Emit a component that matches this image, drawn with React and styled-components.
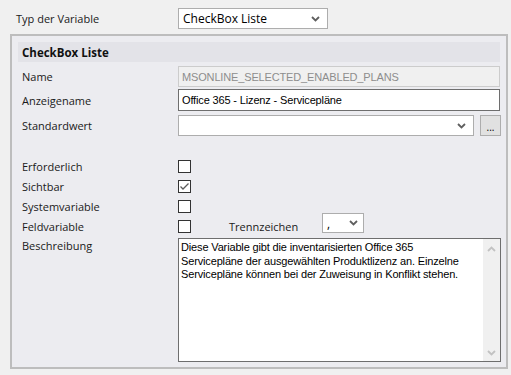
import styled, { createGlobalStyle } from "styled-components";

const Global = createGlobalStyle`
  html, body {
    margin: 0;
    padding: 0;
    background: #f0f0f0;
  }
  #root {
    width: 511px;
    height: 375px;
    overflow: hidden;
  }
`;

const Chevron = ({ color = "#5f5f5f", up }) => (
  <svg width="9" height="6" viewBox="0 0 9 6">
    <path
      d={up ? "M1 5 L4.5 1.5 L8 5" : "M1 1 L4.5 4.5 L8 1"}
      fill="none"
      stroke={color}
      strokeWidth="1.8"
    />
  </svg>
);

const Tick = () => (
  <svg width="11" height="11" viewBox="0 0 11 11">
    <path d="M1.5 5.5 L4 8 L9.5 2.5" fill="none" stroke="#5a5a5a" strokeWidth="1.3" />
  </svg>
);

const App = () => {
  return (
    <Page>
      <Global />
      <TopRow>
        <TopLabel>Typ der Variable</TopLabel>
        <Combo width={150}>
          <ComboText>CheckBox Liste</ComboText>
          <Chevron />
        </Combo>
      </TopRow>

      <Panel>
        <Header>CheckBox Liste</Header>

        <Row top={4} height={21}>
          <Label>Name</Label>
          <Input disabled>MSONLINE_SELECTED_ENABLED_PLANS</Input>
        </Row>
        <Row top={2} height={22}>
          <Label>Anzeigename</Label>
          <Input>Office 365 - Lizenz - Servicepläne</Input>
        </Row>
        <Row top={4} height={21}>
          <Label>Standardwert</Label>
          <Combo width={297}>
            <ComboText />
            <Chevron />
          </Combo>
          <DotsButton>...</DotsButton>
        </Row>

        <CheckRow top={20}>
          <Label>Erforderlich</Label>
          <Box />
        </CheckRow>
        <CheckRow>
          <Label>Sichtbar</Label>
          <Box>
            <Tick />
          </Box>
        </CheckRow>
        <CheckRow>
          <Label>Systemvariable</Label>
          <Box />
        </CheckRow>
        <CheckRow>
          <Label>Feldvariable</Label>
          <Box />
          <SubLabel>Trennzeichen</SubLabel>
          <SmallCombo>
            <ComboText>,</ComboText>
            <Chevron />
          </SmallCombo>
        </CheckRow>

        <MemoRow>
          <Label>Beschreibung</Label>
          <Memo>
            <MemoText>
              Diese Variable gibt die inventarisierten Office 365
              <br />
              Servicepläne der ausgewählten Produktlizenz an. Einzelne
              <br />
              Servicepläne können bei der Zuweisung in Konflikt stehen.
            </MemoText>
            <ScrollTrack>
              <Chevron color="#c2c2c2" up />
              <Chevron color="#c2c2c2" />
            </ScrollTrack>
          </Memo>
        </MemoRow>
      </Panel>
    </Page>
  );
};

const Page = styled.div`
  width: 511px;
  height: 375px;
  background: #f0f0f0;
  font-family: "Open Sans", "Noto Sans", sans-serif;
  font-size: 11px;
  color: #1a1a1a;
  padding-top: 8px;
  box-sizing: border-box;
`;

const TopRow = styled.div`
  display: flex;
  align-items: center;
  height: 21px;
  padding-left: 16px;
`;

const TopLabel = styled.div`
  width: 162px;
`;

const Combo = styled.div`
  width: ${(p) => p.width}px;
  height: 100%;
  box-sizing: border-box;
  display: flex;
  align-items: center;
  background: #fff;
  border: 1px solid #adadad;
  padding: 0 7px 0 4px;
`;

const ComboText = styled.span`
  flex: 1;
  font-size: 12px;
  color: #000;
`;

const Panel = styled.div`
  margin: 5px 0 0 10px;
  width: 498px;
  height: 335px;
  box-sizing: border-box;
  border: 2px solid #bdbdbd;
  background: #ececf0;
  padding: 6px 5px 0 6px;
`;

const Header = styled.div`
  width: 482px;
  height: 20px;
  box-sizing: border-box;
  background: #e3e3e8;
  padding-left: 4px;
  display: flex;
  align-items: center;
  font-weight: 700;
  font-size: 11.5px;
  color: #111;
`;

const Row = styled.div`
  display: flex;
  align-items: center;
  margin-top: ${(p) => p.top}px;
  height: ${(p) => p.height}px;
`;

const Label = styled.div`
  width: 156px;
  flex: none;
  padding-left: 4px;
  color: #1a1a1a;
`;

const Input = styled.div`
  width: 322px;
  height: 100%;
  box-sizing: border-box;
  display: flex;
  align-items: center;
  padding-left: 3px;
  font-family: "Liberation Sans", Arial, sans-serif;
  font-size: 11px;
  letter-spacing: -0.15px;
  background: ${(p) => (p.disabled ? "#f0f0f0" : "#fff")};
  color: ${(p) => (p.disabled ? "#8d8d8d" : "#000")};
  border: 1px solid ${(p) => (p.disabled ? "#cccccc" : "#6e6e6e")};
`;

const DotsButton = styled.div`
  width: 21px;
  height: 100%;
  box-sizing: border-box;
  margin-left: 6px;
  background: #e1e1e1;
  border: 1px solid #adadad;
  display: flex;
  align-items: flex-end;
  justify-content: center;
  padding-bottom: 5px;
  font-size: 10px;
  line-height: 6px;
  color: #000;
`;

const CheckRow = styled.div`
  display: flex;
  align-items: center;
  height: 20px;
  margin-top: ${(p) => p.top || 0}px;
`;

const Box = styled.div`
  width: 13px;
  height: 13px;
  box-sizing: border-box;
  border: 1px solid #333;
  background: #fff;
  display: flex;
  align-items: center;
  justify-content: center;
`;

const SubLabel = styled.div`
  margin-left: 38px;
  width: 93px;
`;

const SmallCombo = styled(Combo)`
  width: 42px;
  height: 20px;
  margin-top: -6px;
  padding: 0 5px 0 4px;
`;

const MemoRow = styled.div`
  display: flex;
  align-items: flex-start;
  margin-top: 2px;
`;

const Memo = styled.div`
  width: 324px;
  height: 124px;
  box-sizing: border-box;
  border: 1px solid #6e6e6e;
  background: #fff;
  display: flex;
`;

const MemoText = styled.div`
  flex: 1;
  padding: 2px 0 0 2px;
  font-family: "Liberation Sans", Arial, sans-serif;
  font-size: 11px;
  letter-spacing: -0.15px;
  line-height: 13.5px;
  color: #000;
`;

const ScrollTrack = styled.div`
  width: 17px;
  background: #f0f0f0;
  display: flex;
  flex-direction: column;
  justify-content: space-between;
  align-items: center;
  padding: 7px 0 5px;
`;

export default App;
